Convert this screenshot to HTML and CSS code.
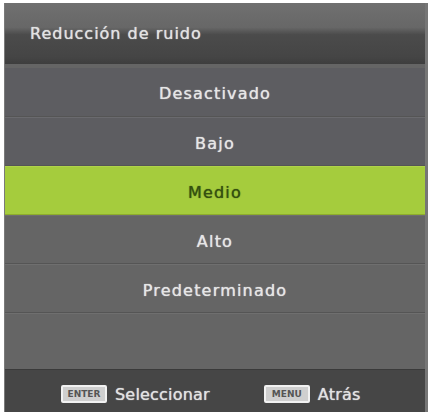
FILE: index.html
```html
<!DOCTYPE html>
<html lang="es">

<head>
    <meta charset="UTF-8">
    <meta name="viewport" content="width=device-width, initial-scale=1.0">
    <title>Reducción de ruido</title>
    <link rel="stylesheet" href="styles.css">
</head>

<body>
    <div class="screen">
        <div class="title-bar">
            <h1>Reducción de ruido</h1>
        </div>
        <ul class="options">
            <li>Desactivado</li>
            <li>Bajo</li>
            <li class="selected">Medio</li>
            <li>Alto</li>
            <li>Predeterminado</li>
            <li class="empty"></li>
        </ul>
        <div class="hints">
            <div class="hint"><span class="key">ENTER</span> Seleccionar</div>
            <div class="hint"><span class="key">MENU</span> Atrás</div>
        </div>
    </div>
</body>

</html>
```

FILE: styles.css
```css
* {
    margin: 0;
    padding: 0;
    box-sizing: border-box;
    font-family: 'DejaVu Sans', 'Liberation Sans', sans-serif;
}

body {
    background: #fff;
    padding: 3px 3px 0 4px;
}

.screen {
    width: 424px;
    height: 409px;
    display: flex;
    flex-direction: column;
    background: #656565;
    border-left: 1px solid #7a7a7a;
    border-right: 3px solid #767676;
}

.title-bar {
    height: 61px;
    display: flex;
    align-items: center;
    padding-left: 25px;
    background: linear-gradient(#707070 0%, #676767 40%, #4b4b4b 52%, #454545 88%, #3e3e3e 100%);
}

.title-bar h1 {
    font-size: 16px;
    font-weight: normal;
    letter-spacing: 1px;
    color: #e2e2e2;
    text-shadow: 0 0 1px #e2e2e2;
    margin-top: 0;
}

.options {
    list-style: none;
    padding-top: 4px;
    flex: 1;
    display: flex;
    flex-direction: column;
}

.options li {
    height: 49px;
    display: flex;
    align-items: center;
    justify-content: center;
    padding-top: 3px;
    font-size: 16px;
    letter-spacing: 1.2px;
    color: #e6e6e6;
    text-shadow: 0 0 1px #e6e6e6;
    border-top: 1px solid #6f6f6f;
    border-bottom: 1px solid #555;
}

.options li:nth-child(1),
.options li:nth-child(2) {
    background: #5d5d61;
    border-top-color: #6a6a6e;
}

.options li:nth-child(1) {
    border-top: 0;
}

.options li.selected {
    background: #a5cc3d;
    color: #355010;
    text-shadow: 0 0 1px #355010;
    border-top-color: #b0d44a;
    border-bottom-color: #8ead2c;
}

.options li.empty {
    flex: 1;
    border-bottom: 0;
}

.hints {
    height: 43px;
    background: #464646;
    border-top: 1px solid #3a3a3a;
    display: flex;
    align-items: center;
    padding-left: 56px;
    gap: 54px;
    padding-top: 6px;
}

.hint {
    display: flex;
    align-items: center;
    gap: 8px;
    font-size: 16px;
    color: #e2e2e2;
    text-shadow: 0 0 1px #e2e2e2;
    letter-spacing: 0.2px;
}

.key {
    width: 46px;
    height: 18px;
    border: 2px solid #f2f2f2;
    border-radius: 2px;
    background: #cfcfcf;
    color: #555;
    font-size: 9px;
    font-weight: bold;
    letter-spacing: 0;
    text-shadow: none;
    display: flex;
    align-items: center;
    justify-content: center;
}
```
